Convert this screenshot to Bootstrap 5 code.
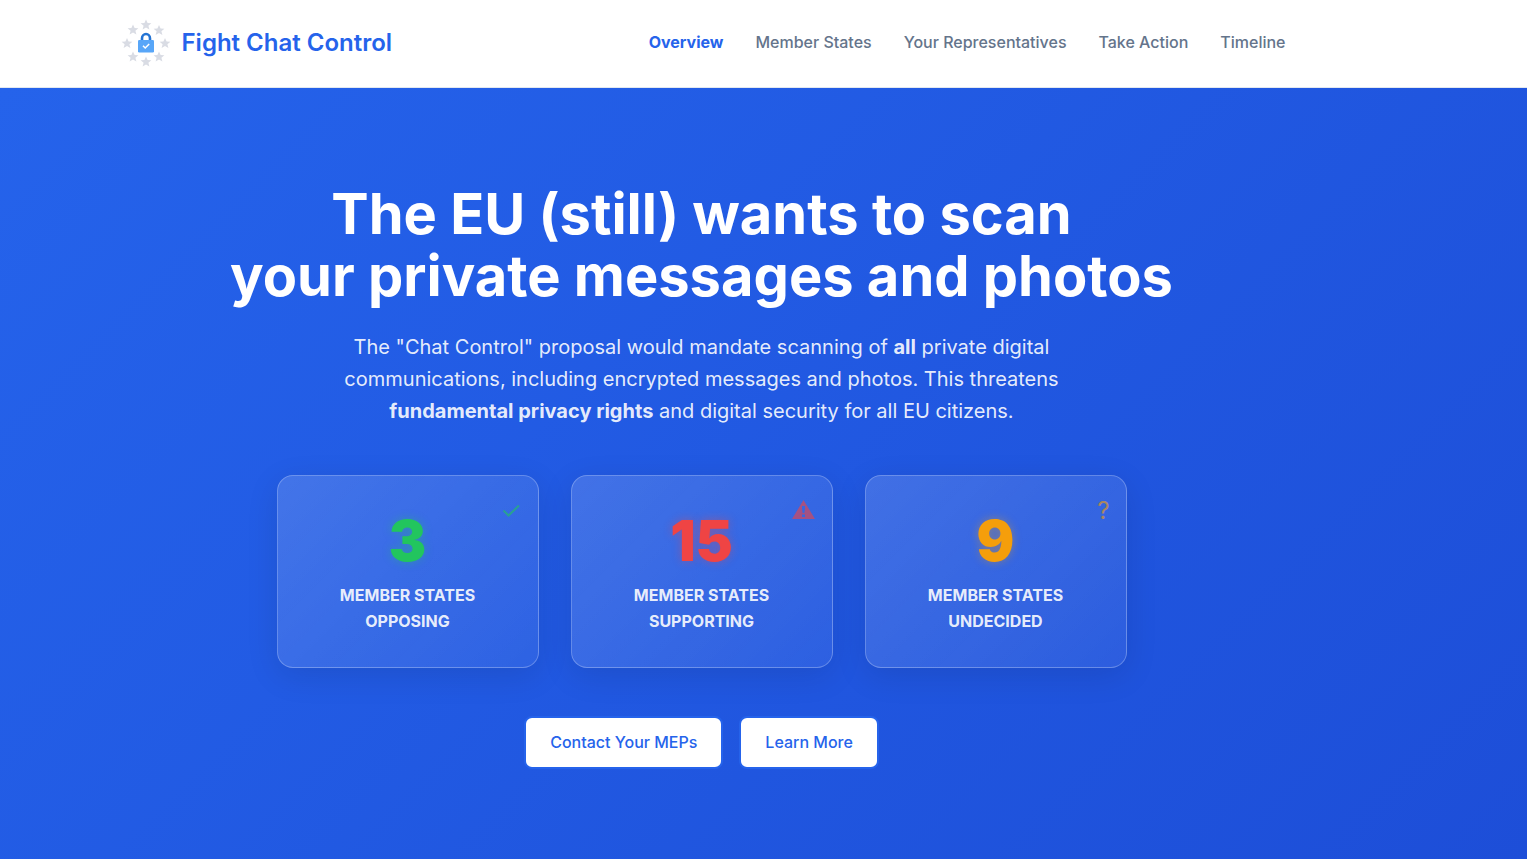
<!DOCTYPE html>
<html lang="en">
<head>
<meta charset="utf-8">
<meta name="viewport" content="width=device-width, initial-scale=1">
<title>Fight Chat Control</title>
<link href="https://cdn.jsdelivr.net/npm/bootstrap@5.3.0/dist/css/bootstrap.min.css" rel="stylesheet">
<style>
body{font-family:Inter,sans-serif;color:#1e293b}
.page-shell{max-width:1200px;padding-inline:16px;margin-left:max(0px,calc(50% - 662px));margin-right:auto}
.site-header{background:#fff;border-bottom:1px solid #e2e8f0}
.site-header .navbar{min-height:87px}
.brand-name{font-size:24px;line-height:36px;font-weight:600;color:#2563eb}
.brand-name:hover{color:#1d4ed8}
.brand-name span{padding-bottom:2px}
.site-nav{gap:8px 32px}
.site-nav .nav-link{font-size:16px;line-height:26px;font-weight:500;color:#64748b;padding:0 0 3px}
.site-nav .nav-link.active{color:#2563eb;font-weight:700}
.hero{background:linear-gradient(135deg,#2563eb 0%,#1d4ed8 100%);color:#fff;padding:95px 0 91px;min-height:calc(100vh - 88px)}
.hero h1{font-size:56px;font-weight:700;line-height:62px;margin-bottom:24px}
.hero-text{font-size:20px;line-height:32px;max-width:720px;color:rgba(255,255,255,.9);margin-bottom:48px}
.stat-grid{max-width:850px;gap:32px;margin-bottom:48px}
.stat-card{flex:1 1 200px;border:1px solid rgba(255,255,255,.25);border-radius:16px;padding:32px 32px 33px;background:linear-gradient(135deg,rgba(255,255,255,.15),rgba(255,255,255,.06));box-shadow:0 8px 32px rgba(0,0,0,.1)}
.stat-number{font-size:56px;font-weight:900;line-height:67px;margin-bottom:7px}
.stat-label{font-size:16px;font-weight:700;line-height:26px;color:rgba(255,255,255,.9)}
.stat-icon{top:16px;right:16px;height:36px;font-size:24px;line-height:38px;opacity:.6}
.opposing{color:#22c55e}
.supporting{color:#ef4444}
.undecided{color:#f59e0b}
.stat-number.opposing{text-shadow:0 0 10px rgba(34,197,94,.4)}
.stat-number.supporting{text-shadow:0 0 10px rgba(239,68,68,.4)}
.stat-number.undecided{text-shadow:0 0 10px rgba(245,158,11,.4)}
.cta,.cta:hover{font-size:16px;line-height:25px;font-weight:500;color:#2563eb;background:#fff;border:2px solid #2563eb;border-radius:8px;padding:12px 24px}
</style>
</head>
<body>
<header class="site-header">
  <div class="page-shell">
    <nav class="navbar p-0" aria-label="Main">
      <a class="d-flex align-items-center gap-2 text-decoration-none brand-name" href="#">
        <svg width="56" height="56" viewBox="0 0 56 56" aria-hidden="true">
          <defs><path id="star" d="M0-5.5 1.6-1.9 5.4-1.7 2.4.8 3.4 4.6 0 2.5-3.4 4.6-2.4.8-5.4-1.7-1.6-1.9Z"/></defs>
          <g fill="#d9dce4">
            <use href="#star" x="28" y="9"/><use href="#star" x="41" y="14.500"/><use href="#star" x="47" y="27.500"/><use href="#star" x="41" y="41"/>
            <use href="#star" x="28" y="46"/><use href="#star" x="15" y="41"/><use href="#star" x="9" y="27.500"/><use href="#star" x="15" y="14"/>
          </g>
          <path d="M24 25v-2.500a4 4.500 0 0 1 8 0V25" fill="none" stroke="#2474d4" stroke-width="2.600"/>
          <rect x="20" y="24" width="16" height="12.500" rx="1.200" fill="#58a6f8"/>
          <path d="m25 29.800 2.200 2.200 4-4" fill="none" stroke="#fff" stroke-width="1.500"/>
        </svg>
        <span>Fight Chat Control</span>
      </a>
      <div class="site-nav d-flex flex-wrap">
        <a class="nav-link active" aria-current="page" href="#">Overview</a>
        <a class="nav-link" href="#">Member States</a>
        <a class="nav-link" href="#">Your Representatives</a>
        <a class="nav-link" href="#">Take Action</a>
        <a class="nav-link" href="#">Timeline</a>
      </div>
    </nav>
  </div>
</header>
<main class="hero">
  <div class="page-shell text-center">
    <h1>The EU (still) wants to scan<br>your private messages and photos</h1>
    <p class="hero-text mx-auto">The "Chat Control" proposal would mandate scanning of <strong>all</strong> private digital communications, including encrypted messages and photos. This threatens <strong>fundamental privacy rights</strong> and digital security for all EU citizens.</p>
    <div class="stat-grid d-flex flex-wrap mx-auto">
      <div class="stat-card position-relative">
        <div class="stat-icon opposing position-absolute d-flex align-items-center">
          <svg width="22" height="18" viewBox="0 0 22 18" aria-hidden="true"><path d="m3.500 9.500 5 5L19 4.500" fill="none" stroke="currentColor" stroke-width="2"/></svg>
        </div>
        <div class="stat-number opposing">3</div>
        <div class="stat-label">MEMBER STATES<br>OPPOSING</div>
      </div>
      <div class="stat-card position-relative">
        <div class="stat-icon supporting position-absolute d-flex align-items-center">
          <svg width="24" height="20" viewBox="0 0 24 20" aria-hidden="true"><path fill="currentColor" fill-rule="evenodd" d="M11.500 0 23 19H0ZM10 6v3l.7 4h1.600l.7-4V6Zm0 8.500V17h3v-2.500Z"/></svg>
        </div>
        <div class="stat-number supporting">15</div>
        <div class="stat-label">MEMBER STATES<br>SUPPORTING</div>
      </div>
      <div class="stat-card position-relative">
        <div class="stat-icon undecided position-absolute">?</div>
        <div class="stat-number undecided">9</div>
        <div class="stat-label">MEMBER STATES<br>UNDECIDED</div>
      </div>
    </div>
    <div class="d-flex flex-wrap justify-content-center gap-3">
      <button type="button" class="btn cta">Contact Your MEPs</button>
      <button type="button" class="btn cta">Learn More</button>
    </div>
  </div>
</main>
<script src="https://cdn.jsdelivr.net/npm/bootstrap@5.3.0/dist/js/bootstrap.bundle.min.js"></script>
</body>
</html>
